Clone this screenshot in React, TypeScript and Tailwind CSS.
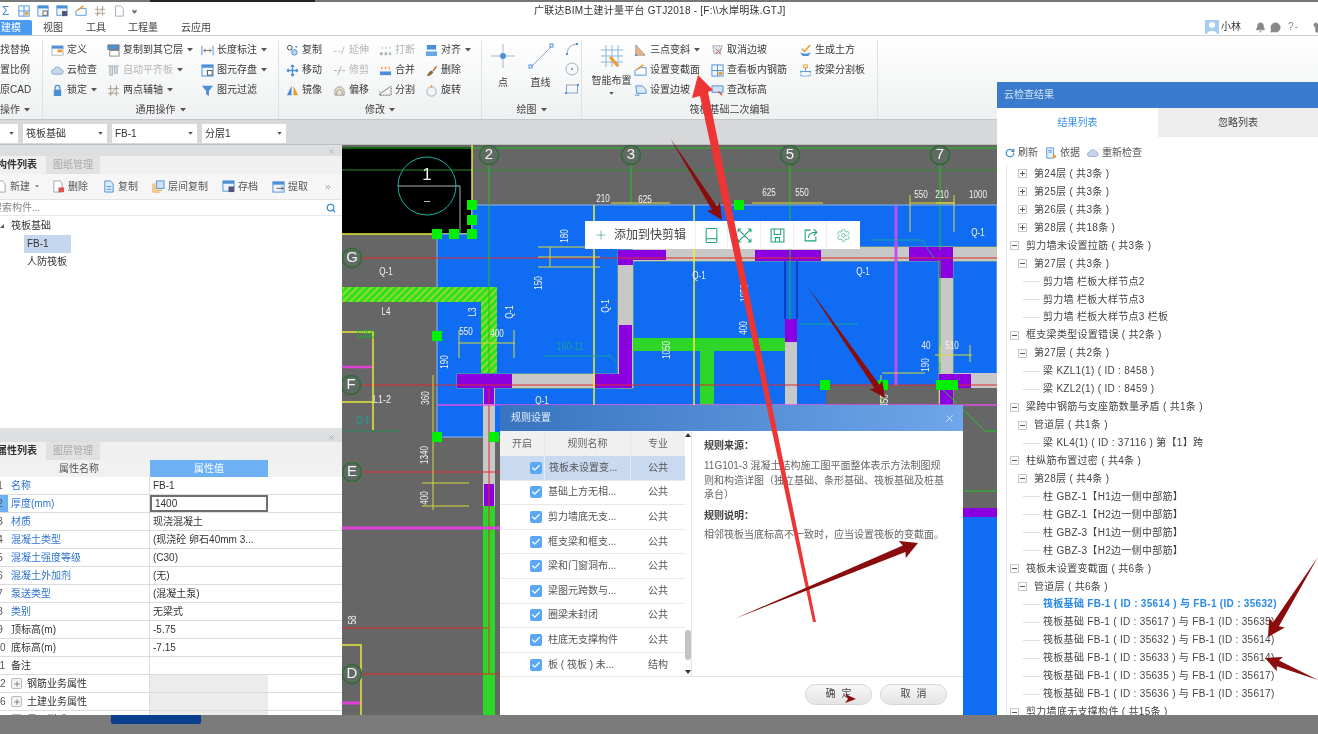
import type { ReactNode } from "react";
import { Check, Search, X, Plus, Bell, MessageCircle, Shirt, RotateCw, ChevronsRight, Settings } from "lucide-react";

const Ic = ({ children, size = 13 }: { children: ReactNode; size?: number }) => (
  <svg width={size} height={size} viewBox="0 0 14 14" fill="none" className="shrink-0">
    {children}
  </svg>
);

const B = "#4a8fd8";
const O = "#ee9a2e";
const G = "#a9b3bd";

const icons: { [key: string]: ReactNode } = {
  define: <><rect x="1" y="2" width="12" height="10" fill="#fff" stroke={G} /><rect x="1" y="2" width="12" height="3" fill={B} /><rect x="7" y="6" width="5" height="3" fill={O} /></>,
  cloud: <path d="M3 11a2.5 2.5 0 0 1 0-5 4 4 0 0 1 7.5-.5A2.8 2.8 0 0 1 11 11Z" fill="#c5d6ea" stroke="#8fabc9" />,
  lock: <><path d="M4.5 6V4a2.5 2.5 0 0 1 5 0v2" stroke={B} strokeWidth="1.4" /><rect x="3" y="6" width="8" height="7" rx="1" fill={B} /></>,
  copyFloor: <><rect x="1" y="1" width="12" height="5" fill={B} stroke="#777" /><rect x="3" y="7" width="10" height="6" fill="#fff" stroke="#888" /></>,
  align: <><path d="M1 2h12" stroke={G} /><rect x="3" y="3" width="3" height="9" fill="#ddd" stroke={G} /><rect x="8" y="3" width="3" height="7" fill="#ddd" stroke={G} /></>,
  axis: <path d="M4 1v12M10 1v12M1 5h12M1 10h12M3 12l8-9" stroke="#9a8f75" strokeWidth="0.8" />,
  dim: <><path d="M1 2v10M13 2v10" stroke={B} /><path d="M3 7h8M3 7l2-2M3 7l2 2M11 7 9 5M11 7 9 9" stroke="#555" strokeWidth="0.8" /></>,
  store: <><rect x="1" y="1" width="12" height="12" fill="#eef4fb" stroke={B} /><rect x="1" y="1" width="12" height="3" fill={B} /><rect x="7" y="7" width="5" height="5" fill="#fff" stroke="#555" /></>,
  filter: <path d="M1 2h12L8.5 7.5V13L5.5 11V7.5Z" fill={B} />,
  copy: <><circle cx="4" cy="4" r="2.5" stroke="#444" /><circle cx="9" cy="9" r="3" fill="#b7d3f0" stroke={B} /><circle cx="11" cy="3" r="1" fill={B} /></>,
  move: <path d="M7 1v12M1 7h12M7 1 5.5 3M7 1l1.5 2M7 13l-1.5-2M7 13l1.5-2M1 7l2-1.5M1 7l2 1.5M13 7l-2-1.5M13 7l-2 1.5" stroke={B} strokeWidth="1.4" />,
  mirror: <><path d="M1 12 6 2v10Z" fill={B} /><path d="M13 12 8 2v10Z" fill={O} /></>,
  extend: <path d="M1 8h3M6 8h2M12 3 9 11" stroke="#bbb" />,
  trim: <path d="M1 7h3M6 7h2M10 7h3M9 2 5 12" stroke="#aaa" />,
  offset: <><path d="M2 12V8a5 5 0 0 1 10 0v4Z" fill="#ece5c8" stroke="#999" /><path d="M4 12V9a3 3 0 0 1 6 0v3" stroke="#999" /></>,
  breakIt: <><rect x="1" y="9" width="3" height="3" fill={G} /><rect x="6" y="9" width="3" height="3" fill={G} /><rect x="11" y="9" width="2" height="3" fill={G} /><path d="M3 4h1M7 4h1M11 4h1" stroke={G} strokeWidth="2" /></>,
  merge: <><rect x="1" y="8" width="12" height="4" fill={B} /><path d="M3 3v3M7 3v3M11 3v3" stroke={O} strokeWidth="1.4" /></>,
  split: <><path d="M1 12h12M1 12V8M13 12V2" stroke="#555" strokeDasharray="2 1" /><path d="M2 10 12 3" stroke="#777" /></>,
  alignR: <><rect x="2" y="1" width="10" height="5" fill={B} /><rect x="1" y="8" width="12" height="5" fill="#6aa6e6" /></>,
  del: <><path d="M2 13c1-3 3-5 5-6l2 2c-1 2-3 4-7 4Z" fill="#8c6b3a" /><path d="M8 7l4-5 1 1-4 5Z" fill="#b36a2c" /></>,
  rotate: <><circle cx="7" cy="8" r="5" stroke="#b8c4cf" strokeWidth="1.4" /><path d="M7 1v3" stroke={O} strokeWidth="1.4" /></>,
  slope: <><path d="M2 1v11h10Z" fill="#f0b27a" stroke="#999" /><rect x="1" y="11" width="2" height="2" fill={B} /></>,
  section: <><path d="M1 12V7l6-3h6v8Z" fill="#fff" stroke={B} /><path d="M3 6l7-5" stroke={O} strokeWidth="1.6" /></>,
  slopeSet: <><path d="M2 2h7l4 4v4H3Z" fill="#dbe8f5" stroke={B} /><path d="M1 12h5" stroke={B} /></>,
  cancel: <><path d="M2 2h10l-2 8H3Z" fill="#dbe8f5" stroke="#888" strokeDasharray="2 1" /><path d="M5 5l6 6M11 5l-6 6" stroke="#d65b4a" /></>,
  rebar: <><rect x="1" y="1" width="12" height="12" fill="#f2f7fc" stroke={B} /><path d="M1 7h12M7 1v12" stroke={B} /><circle cx="10" cy="10" r="2" fill={O} /></>,
  level: <><path d="M1 2h12v7H6L1 9Z" fill="#cfe0f2" stroke={B} /><path d="M8 8l4 4" stroke="#d65b4a" strokeWidth="1.6" /></>,
  earth: <><path d="M3 5l3 3 6-7" stroke={O} strokeWidth="1.6" /><path d="M1 9c3 2 9 2 12 0l-3 4H4Z" fill={B} /></>,
  cut: <><rect x="5" y="1" width="4" height="3" stroke={O} /><path d="M7 4v3M1 8h12" stroke={B} /><path d="M2 8v5h10V8" stroke={B} strokeDasharray="2 1" /></>,
  doc: <><path d="M3 1h6l3 3v9H3Z" fill="#fff" stroke="#9aa5b1" /></>,
  docDel: <><path d="M2 1h7l2 3v9H2Z" fill="#fff" stroke="#9aa5b1" /><rect x="7" y="8" width="6" height="5" fill="#d9534f" /></>,
  docCopy: <><path d="M3 1h6l3 3v9H3Z" fill="#dcebfa" stroke={B} /><path d="M5 7h5M5 10h5" stroke={B} /></>,
  layerCopy: <><rect x="5" y="1" width="8" height="8" fill="#cfe3f8" stroke={B} /><path d="M1 4v9h8M3 3v8h8" stroke={O} /></>,
  archive: <><rect x="1" y="1" width="12" height="11" fill="#eef4fb" stroke={B} /><rect x="1" y="1" width="12" height="3" fill={B} /><rect x="7" y="7" width="6" height="6" fill="#557" /></>,
  extract: <><rect x="1" y="2" width="12" height="11" fill="#eef4fb" stroke={B} /><rect x="1" y="2" width="12" height="3" fill={B} /><path d="M5 9h7M10 7l2 2-2 2" stroke="#555" /></>,
  ref: <><path d="M2 1h8v12H2Z" fill="#e3eefa" stroke={B} /><path d="M4 4h4M4 6h4" stroke={B} /><circle cx="11" cy="11" r="2" fill={O} /></>,
};

const Caret = () => (
  <svg width="6" height="4" viewBox="0 0 6 4" className="ml-[4px] shrink-0">
    <path d="M0 0h6L3 3.5Z" fill="#555" />
  </svg>
);

type Item = { icon: string; label: string; caret?: boolean; off?: boolean };

const RibbonCol = ({ items, className }: { items: Item[]; className: string }) => (
  <div className={`flex flex-col ${className}`}>
    {items.map((it) => (
      <div key={it.label} className={`flex h-[20px] items-center ${it.off ? "text-[#b5b5b5]" : "text-[#3a3a3a]"}`}>
        <span className="w-[16px]">
          <Ic>{icons[it.icon]}</Ic>
        </span>
        <span className="whitespace-nowrap">{it.label}</span>
        {it.caret && <Caret />}
      </div>
    ))}
  </div>
);

const GroupLabel = ({ text, caret = true }: { text: string; caret?: boolean }) => (
  <div className="flex h-[20px] items-center justify-center text-[#444]">
    {text}
    {caret && <Caret />}
  </div>
);

const Ribbon = () => (
  <div className="flex h-[84px] border-b border-[#c4c6c8] bg-gradient-to-b from-white to-[#eef0f1] pt-[4px]">
    <div className="w-[43px] border-r border-[#dfe1e3]">
      <div className="flex h-[60px] flex-col text-[#3a3a3a]">
        <div className="flex h-[20px] items-center">找替换</div>
        <div className="flex h-[20px] items-center">置比例</div>
        <div className="flex h-[20px] items-center">原CAD</div>
      </div>
      <div className="flex h-[19px] items-center text-[#444]">
        操作
        <Caret />
      </div>
    </div>

    <div className="w-[236px] border-r border-[#dfe1e3]">
      <div className="flex h-[60px] pl-[8px]">
        <RibbonCol className="w-[56px]" items={[{ icon: "define", label: "定义" }, { icon: "cloud", label: "云检查" }, { icon: "lock", label: "锁定", caret: true }]} />
        <RibbonCol className="w-[94px]" items={[{ icon: "copyFloor", label: "复制到其它层", caret: true }, { icon: "align", label: "自动平齐板", caret: true, off: true }, { icon: "axis", label: "两点辅轴", caret: true }]} />
        <RibbonCol className="w-[77px]" items={[{ icon: "dim", label: "长度标注", caret: true }, { icon: "store", label: "图元存盘", caret: true }, { icon: "filter", label: "图元过滤" }]} />
      </div>
      <GroupLabel text="通用操作" />
    </div>

    <div className="w-[203px] border-r border-[#dfe1e3]">
      <div className="flex h-[60px] pl-[7px]">
        <RibbonCol className="w-[47px]" items={[{ icon: "copy", label: "复制" }, { icon: "move", label: "移动" }, { icon: "mirror", label: "镜像" }]} />
        <RibbonCol className="w-[46px]" items={[{ icon: "extend", label: "延伸", off: true }, { icon: "trim", label: "修剪", off: true }, { icon: "offset", label: "偏移" }]} />
        <RibbonCol className="w-[46px]" items={[{ icon: "breakIt", label: "打断", off: true }, { icon: "merge", label: "合并" }, { icon: "split", label: "分割" }]} />
        <RibbonCol className="w-[50px]" items={[{ icon: "alignR", label: "对齐", caret: true }, { icon: "del", label: "删除" }, { icon: "rotate", label: "旋转" }]} />
      </div>
      <GroupLabel text="修改" />
    </div>

    <div className="w-[100px] border-r border-[#dfe1e3]">
      <div className="flex h-[60px] text-[#3a3a3a]">
        <div className="flex w-[42px] flex-col items-center pt-[3px]">
          <svg width="26" height="26" viewBox="0 0 26 26">
            <path d="M13 1v24M1 13h24" stroke="#9fb9d6" />
            <circle cx="13" cy="13" r="3" fill={B} />
          </svg>
          <span className="mt-[9px]">点</span>
        </div>
        <div className="flex w-[33px] flex-col items-center pt-[3px]">
          <svg width="26" height="26" viewBox="0 0 26 26">
            <path d="M3 24 24 3" stroke="#8aa6c4" />
            <rect x="1" y="22" width="3" height="3" fill="#fff" stroke={B} />
            <rect x="22" y="1" width="3" height="3" fill="#fff" stroke={B} />
          </svg>
          <span className="mt-[9px]">直线</span>
        </div>
        <div className="flex flex-col items-center gap-[6px] pl-[8px] pt-[2px]">
          <svg width="14" height="14" viewBox="0 0 14 14" fill="none"><path d="M2 13C2 6 6 2 13 2" stroke="#8aa6c4" /><rect x="1" y="11" width="2" height="2" fill={B} /><rect x="11" y="1" width="2" height="2" fill={B} /></svg>
          <svg width="14" height="14" viewBox="0 0 14 14" fill="none"><circle cx="7" cy="7" r="6" stroke="#9fb2c6" /><circle cx="7" cy="7" r="1" fill={B} /></svg>
          <svg width="14" height="14" viewBox="0 0 14 14" fill="none"><rect x="1.5" y="3" width="11" height="8" stroke="#8aa6c4" /><rect x="0" y="10" width="2" height="2" fill={B} /><rect x="12" y="2" width="2" height="2" fill={B} /></svg>
        </div>
      </div>
      <GroupLabel text="绘图" />
    </div>

    <div className="w-[296px] border-r border-[#dfe1e3]">
      <div className="flex h-[60px] pl-[7px]">
        <div className="flex w-[45px] flex-col items-center pt-[4px] text-[#3a3a3a]">
          <svg width="28" height="26" viewBox="0 0 28 26">
            <path d="M3 6h22M3 12h22M3 18h22M8 1v22M14 1v22M20 1v22" stroke="#8ab4e2" />
            <path d="M12 13l8 9" stroke={O} strokeWidth="3" />
          </svg>
          <span className="mt-[6px] whitespace-nowrap">智能布置</span>
          <svg width="5" height="3" viewBox="0 0 6 4" className="mt-[6px]"><path d="M0 0h6L3 3.5Z" fill="#555" /></svg>
        </div>
        <RibbonCol className="w-[77px]" items={[{ icon: "slope", label: "三点变斜", caret: true }, { icon: "section", label: "设置变截面" }, { icon: "slopeSet", label: "设置边坡" }]} />
        <RibbonCol className="w-[88px]" items={[{ icon: "cancel", label: "取消边坡" }, { icon: "rebar", label: "查看板内钢筋" }, { icon: "level", label: "查改标高" }]} />
        <RibbonCol className="w-[72px]" items={[{ icon: "earth", label: "生成土方" }, { icon: "cut", label: "按梁分割板" }]} />
      </div>
      <GroupLabel text="筏板基础二次编辑" caret={false} />
    </div>
  </div>
);

const Selector = ({ text, className }: { text: string; className: string }) => (
  <div className={`flex h-[19px] items-center justify-between bg-white pl-[3px] pr-[4px] text-[#333] ${className}`}>
    <span>{text}</span>
    <svg width="5" height="3" viewBox="0 0 6 4"><path d="M0 0h6L3 3.5Z" fill="#555" /></svg>
  </div>
);

const PanelTop = () => (
  <div className="flex h-[10px] shrink-0 items-center justify-end bg-[#dcdee0] pr-[7px]">
    <X size={7} strokeWidth={2} className="text-[#8f959b]" />
  </div>
);

const PanelTabs = ({ active, other }: { active: string; other: string }) => (
  <div className="flex h-[18px] shrink-0 bg-[#f0f0f0]">
    <div className="-ml-[3px] flex w-[49px] items-center font-bold text-[#333]">{active}</div>
    <div className="flex w-[54px] items-center justify-center bg-[#e1e1e1] text-[#aaa]">{other}</div>
  </div>
);

const tools: [string, string, string][] = [
  ["docCopy", "复制", "w-[50px]"],
  ["layerCopy", "层间复制", "w-[70px]"],
  ["archive", "存档", "w-[50px]"],
  ["extract", "提取", "w-[52px]"],
];

const ComponentPanel = () => (
  <div className="flex h-[282px] shrink-0 flex-col bg-white">
    <PanelTop />
    <PanelTabs active="构件列表" other="图纸管理" />
    <div className="flex h-[26px] shrink-0 items-center border-b border-[#e4e4e4] bg-[#f6f6f6] text-[#555]">
      <div className="-ml-[6px] flex w-[58px] items-center gap-[3px]">
        <Ic size={13}>{icons.doc}</Ic>
        <span>新建</span>
        <svg width="4" height="3" viewBox="0 0 6 4" className="ml-[2px]"><path d="M0 0h6L3 3.5Z" fill="#777" /></svg>
      </div>
      <div className="flex w-[50px] items-center gap-[3px]">
        <Ic size={13}>{icons.docDel}</Ic>
        <span>删除</span>
      </div>
      {tools.map(([icon, label, w]) => (
        <div key={label} className={`flex items-center gap-[3px] ${w}`}>
          <Ic size={13}>{icons[icon]}</Ic>
          <span>{label}</span>
        </div>
      ))}
      <ChevronsRight size={8} className="text-[#777]" />
    </div>
    <div className="flex h-[16px] shrink-0 items-center justify-between border-b border-[#e8e8e8] pr-[6px] text-[#888]">
      <span className="-ml-[8px]">搜索构件...</span>
      <Search size={10} strokeWidth={3} className="text-[#3f8fd0]" />
    </div>
    <div className="flex flex-col pt-[1px] text-[#333]">
      <div className="flex h-[18px] items-center">
        <svg width="4" height="4" viewBox="0 0 4 4" className="ml-[0px] mr-[7px]"><path d="M4 0v4H0Z" fill="#555" /></svg>
        筏板基础
      </div>
      <div className="ml-[24px] flex h-[18px] w-[47px] items-center bg-[#c5d7ee] pl-[3px]">FB-1</div>
      <div className="ml-[27px] flex h-[18px] items-center">人防筏板</div>
    </div>
  </div>
);

const attrs: [string, string, string, boolean][] = [
  ["1", "名称", "FB-1", true],
  ["2", "厚度(mm)", "1400", true],
  ["3", "材质", "现浇混凝土", true],
  ["4", "混凝土类型", "(现浇砼 卵石40mm 3...", true],
  ["5", "混凝土强度等级", "(C30)", true],
  ["6", "混凝土外加剂", "(无)", true],
  ["7", "泵送类型", "(混凝土泵)", true],
  ["8", "类别", "无梁式", true],
  ["9", "顶标高(m)", "-5.75", false],
  ["10", "底标高(m)", "-7.15", false],
  ["11", "备注", "", false],
];

const AttrRow = ({ no, children, value, boxed, shaded }: { no: string; children: ReactNode; value: string; boxed?: boolean; shaded?: boolean }) => (
  <div className="flex h-[18px] shrink-0 border-b border-[#dcdcdc]">
    <div className={`flex w-[8px] items-center overflow-hidden text-[#555] ${boxed ? "bg-[#6db1f5]" : ""}`}>
      <span className="-ml-[8px] w-[16px] shrink-0 text-center">{no}</span>
    </div>
    <div className="flex w-[142px] items-center border-r border-[#dcdcdc] pl-[3px]">{children}</div>
    <div className={`flex w-[118px] items-center pl-[3px] text-[#333] ${boxed ? "border-2 border-[#6e6e6e] pl-[1px]" : ""} ${shaded ? "bg-[#ececec]" : ""}`}>{value}</div>
  </div>
);

const PlusBox = () => (
  <span className="mr-[5px] flex h-[11px] w-[11px] items-center justify-center rounded-[2px] border border-[#bbb] bg-[#f3f3f3]">
    <Plus size={8} strokeWidth={2} className="text-[#555]" />
  </span>
);

const AttrPanel = () => (
  <div className="flex h-[283px] shrink-0 flex-col overflow-hidden bg-white">
    <PanelTop />
    <PanelTabs active="属性列表" other="图层管理" />
    <div className="flex h-[17px] shrink-0 bg-[#f1f1f1]">
      <div className="flex w-[150px] items-center justify-center pl-[8px] text-[#555]">属性名称</div>
      <div className="flex w-[118px] items-center justify-center bg-[#6db1f5] text-white">属性值</div>
    </div>
    {attrs.map(([no, name, value, link]) => (
      <AttrRow key={no} no={no} value={value} boxed={no === "2"}>
        <span className={link ? "text-[#2f74d0]" : "text-[#333]"}>{name}</span>
      </AttrRow>
    ))}
    <AttrRow no="12" value="" shaded>
      <PlusBox />
      <span className="text-[#333]">钢筋业务属性</span>
    </AttrRow>
    <AttrRow no="26" value="" shaded>
      <PlusBox />
      <span className="text-[#333]">土建业务属性</span>
    </AttrRow>
    <AttrRow no="36" value="" shaded>
      <PlusBox />
      <span className="text-[#333]">显示样式</span>
    </AttrRow>
  </div>
);

// CAD labels are condensed, so squeeze them with textLength
const Num = ({ x, y, t, r, fill = "#f2f2f2" }: { x: number; y: number; t: string; r?: boolean; fill?: string }) => (
  <text
    x={x}
    y={y}
    fontSize={11}
    fill={fill}
    textAnchor="middle"
    dominantBaseline="middle"
    textLength={t.length * 4.5}
    lengthAdjust="spacingAndGlyphs"
    transform={r ? `rotate(-90 ${x} ${y})` : undefined}
  >
    {t}
  </text>
);

const AxisMark = ({ x, y, t }: { x: number; y: number; t: string }) => (
  <g>
    <circle cx={x} cy={y} r={9.5} fill="#5f6b62" stroke="#2f6a35" strokeWidth="1.5" />
    <text x={x} y={y + 0.5} fontSize={15} fill="#f4f4f4" textAnchor="middle" dominantBaseline="middle">{t}</text>
  </g>
);

const squares: [number, number][] = [[472, 205], [472, 220], [472, 234], [454, 234], [437, 234], [739, 205], [437, 336], [825, 385], [883, 385], [437, 437], [494, 437]];

const labels: [number, number, string, boolean?][] = [
  [603, 199, "210"], [645, 200, "625"], [769, 193, "625"], [802, 193, "550"], [921, 195, "550"], [942, 195, "210"], [978, 195, "1000"],
  [386, 272, "Q-1"], [386, 312, "L4"], [382, 400, "L1-2"],
  [473, 312, "L3", true], [510, 312, "Q-1", true], [606, 306, "Q-1", true],
  [542, 401, "Q-1"], [699, 276, "Q-1"], [863, 272, "Q-1"], [978, 233, "Q-1"],
  [565, 236, "180", true], [539, 283, "150", true], [466, 332, "550"], [497, 334, "400"],
  [445, 362, "190", true], [426, 398, "360", true], [425, 455, "1340", true], [425, 498, "400", true], [353, 620, "58", true],
  [667, 350, "1050", true], [745, 293, "1050", true], [744, 328, "400", true], [926, 365, "190", true], [885, 401, "350", true], [926, 346, "40"], [952, 346, "510"],
];

const Canvas = () => (
  <div className="h-[570px] w-[655px] shrink-0 bg-[#666666]">
    <svg width="655" height="570" viewBox="342 145 655 570" fill="none" className="block">
      <defs>
        <pattern id="hatch" width="5" height="5" patternUnits="userSpaceOnUse" patternTransform="rotate(45)">
          <rect width="5" height="5" fill="#2fe01c" />
          <rect width="1.6" height="5" fill="#a8d83a" />
        </pattern>
      </defs>
      <rect x="342" y="147" width="130" height="87" fill="#000" />
      <path d="M342 148H997" stroke="#22c322" />
      <path d="M342 170H997" stroke="#2c8a2c" />
      <path d="M342 234H472V145" stroke="#e8e83a" strokeWidth="1.5" />
      <circle cx="427" cy="186" r="29" stroke="#17b3a3" />
      <path d="M398 186H460V281" stroke="#aab6b6" />
      <text x="427" y="176" fontSize="17" fill="#f2f2f2" textAnchor="middle" dominantBaseline="middle">1</text>
      <text x="427" y="201" fontSize="11" fill="#f2f2f2" textAnchor="middle" dominantBaseline="middle">–</text>

      {/* slab */}
      <path d="M472 205H997V388H953V405H595V437H437V234H472Z" fill="#0f6cf3" stroke="#8cb8f0" />
      <rect x="826" y="385" width="113" height="20" fill="#666" />
      <rect x="953" y="388" width="44" height="17" fill="#666" />
      <rect x="500" y="405" width="497" height="310" fill="#0f6cf3" />
      <rect x="940" y="405" width="57" height="105" fill="#666" />

      {/* hatched beam */}
      <path d="M342 287H497V373H481V302H342Z" fill="url(#hatch)" />

      {/* beams */}
      <rect x="633" y="247" width="364" height="14" fill="#c8c8c8" stroke="#d8d84a" strokeWidth="0.6" />
      <rect x="618" y="250" width="15" height="138" fill="#c8c8c8" stroke="#d8d84a" strokeWidth="0.6" />
      <rect x="457" y="374" width="175" height="14" fill="#c8c8c8" stroke="#d8d84a" strokeWidth="0.6" />
      <rect x="483" y="388" width="12" height="118" fill="#c8c8c8" />
      <rect x="939" y="247" width="14" height="168" fill="#c8c8c8" stroke="#d8d84a" strokeWidth="0.6" />
      <rect x="953" y="373" width="44" height="15" fill="#c8c8c8" />
      <rect x="785" y="342" width="12" height="63" fill="#c8c8c8" />
      <path d="M785 261V319M797 261V319" stroke="#0a2fb0" strokeWidth="1.5" />
      <rect x="633" y="338" width="152" height="13" fill="#2fd62a" />
      <rect x="700" y="351" width="14" height="54" fill="#2fd62a" />
      <rect x="483" y="506" width="12" height="209" fill="#2fd62a" />

      <g fill="#8a00e0">
        <rect x="457" y="374" width="55" height="14" />
        <rect x="484" y="388" width="10" height="16" />
        <rect x="595" y="374" width="37" height="14" />
        <rect x="619" y="325" width="13" height="63" />
        <rect x="618" y="250" width="15" height="15" />
        <rect x="633" y="250" width="33" height="10" />
        <rect x="755" y="250" width="66" height="11" />
        <rect x="909" y="247" width="44" height="14" />
        <rect x="939" y="247" width="14" height="31" />
        <rect x="785" y="319" width="12" height="23" />
        <rect x="939" y="374" width="32" height="14" />
        <rect x="940" y="388" width="13" height="17" />
        <rect x="484" y="484" width="10" height="22" />
        <rect x="963" y="508" width="34" height="9" />
      </g>

      {/* lines */}
      <path d="M342 258H997" stroke="#e02a2a" />
      <path d="M342 385H997" stroke="#e02a2a" />
      <path d="M342 472H500" stroke="#e02a2a" />
      <path d="M342 628H489M342 674H500M489 388V674" stroke="#e02a2a" />
      <path d="M437 405H997" stroke="#e050e0" strokeWidth="1.5" />
      <path d="M342 528H500" stroke="#e040d8" strokeWidth="3" />
      <path d="M342 703H361" stroke="#e040d8" strokeWidth="3" />
      <path d="M342 367H373" stroke="#e040d8" strokeWidth="2.5" />
      <path d="M896 206V385" stroke="#c050f0" strokeWidth="3" />
      <path d="M342 332H373V430M342 402H373" stroke="#e8e83a" strokeWidth="1.5" />
      <path d="M342 645H361V715" stroke="#e8e83a" strokeWidth="1.5" />
      <path d="M594 205V405M694 205V405" stroke="#eeee33" strokeWidth="1.5" />
      <path d="M489 155V374M631 155V205M790 155V320M940 155V250M940 260V373" stroke="#22c322" />
      <path d="M433 375V510M422 483H469M422 506H469" stroke="#d8d83a" />
      <path d="M611 203H670M752 203H823M910 203H955M936 203H954M910 195V232M954 195V232" stroke="#d8d83a" />
      <path d="M459 343H515M459 330V358M514 330V358M538 247H600M538 257H600M538 267H600M550 247V267" stroke="#d8d83a" />
      <path d="M935 355H972M970 345V362M940 345V362M882 373H925M881 375V405" stroke="#d8d83a" />
      <path d="M544 356H610L617 362M870 240H922L934 258M800 324H858" stroke="#15a59a" />
      <path d="M342 431H400" stroke="#2a8a5a" />
      <path d="M941 388 985 431H997" stroke="#22c322" />
      <path d="M963 491H997" stroke="#22c322" />

      {squares.map(([x, y]) => (
        <rect key={`${x}-${y}`} x={x - 5} y={y - 5} width="10" height="10" fill="#00f000" />
      ))}
      <rect x="936" y="380" width="22" height="10" fill="#00f000" />

      <AxisMark x={489} y={155} t="2" />
      <AxisMark x={631} y={155} t="3" />
      <AxisMark x={790} y={155} t="5" />
      <AxisMark x={940} y={155} t="7" />
      <AxisMark x={352} y={258} t="G" />
      <AxisMark x={351} y={385} t="F" />
      <AxisMark x={352} y={472} t="E" />
      <AxisMark x={352} y={674} t="D" />

      {labels.map(([x, y, t, r]) => (
        <Num key={`${x}-${y}`} x={x} y={y} t={t} r={r} />
      ))}
      <Num x={366} y={335} t="C350" fill="#12c020" />
      <Num x={363} y={421} t="Q-1" fill="#15a59a" />
      <Num x={570} y={347} t="160-11" fill="#15a59a" />
    </svg>
  </div>
);

const clipIcons: ReactNode[] = [
  <><rect x="2" y="0.5" width="10" height="13" rx="1" /><path d="M2 10h10" /></>,
  <path d="M1 1l12 12M13 1 1 13M1 1h3M1 1v3M13 1h-3M13 1v3M1 13h3M1 13v-3M13 13h-3M13 13v-3" />,
  <><path d="M1 1h12v12H1Z" /><path d="M4 1v5h6V1M5 13V9h4v4" /></>,
  <><path d="M7 2H2v10h10V8" /><path d="M5 9c0-3 3-5 8-5M10 1l3 3-3 3" /></>,
];

const ClipBar = () => (
  <div className="absolute left-[585px] top-[221px] flex h-[28px] w-[275px] items-center bg-white text-[12px] text-[#444]">
    <div className="flex h-full w-[111px] items-center border-r border-[#eee] pl-[9px]">
      <Plus size={14} strokeWidth={1} className="mr-[6px] text-[#1d9a6c]" />
      添加到快剪辑
    </div>
    {clipIcons.map((icon, i) => (
      <div key={i} className="flex h-full w-[33px] items-center justify-center border-r border-[#eee]">
        <svg width="15" height="15" viewBox="0 0 14 14" fill="none" stroke="#21a179" strokeWidth="1">
          {icon}
        </svg>
      </div>
    ))}
    <div className="flex h-full w-[33px] items-center justify-center">
      <Settings size={15} strokeWidth={1} className="text-[#21a179]" />
    </div>
  </div>
);

const rules: [string, string][] = [
  ["筏板未设置变...", "公共"],
  ["基础上方无相...", "公共"],
  ["剪力墙底无支...", "公共"],
  ["框支梁和框支...", "公共"],
  ["梁和门窗洞布...", "公共"],
  ["梁图元跨数与...", "公共"],
  ["圈梁未封闭", "公共"],
  ["柱底无支撑构件", "公共"],
  ["板 ( 筏板 ) 未...", "结构"],
];

const RuleDialog = () => (
  <div className="absolute left-[500px] top-[405px] flex h-[310px] w-[463px] flex-col bg-white text-[#555]">
    <div className="flex h-[26px] shrink-0 items-center justify-between bg-gradient-to-r from-[#3874c0] to-[#70a6ea] pl-[11px] pr-[8px] text-[#e8f0fa]">
      规则设置
      <X size={11} strokeWidth={2} className="text-[#dde8f5]" />
    </div>
    <div className="flex h-[246px] shrink-0 border-b border-[#e5e5e5]">
      <div className="flex w-[192px] border-r border-[#e5e5e5]">
        <div className="w-[185px]">
          <div className="flex h-[25px] bg-[#f0f0f0] text-[#666]">
            <div className="flex w-[44px] items-center justify-center">开启</div>
            <div className="flex w-[87px] items-center justify-center border-x border-[#e6e6e6]">规则名称</div>
            <div className="flex w-[54px] items-center justify-center">专业</div>
          </div>
          {rules.map(([name, major], i) => (
            <div key={name} className={`flex h-[24.6px] border-b border-[#e8e8e8] ${i === 0 ? "bg-[#c9daf0]" : ""}`}>
              <div className="flex w-[44px] items-center justify-end pr-[2px]">
                <span className="flex h-[12px] w-[12px] items-center justify-center rounded-[2px] bg-[#5aa7f5]">
                  <Check size={10} strokeWidth={3} className="text-white" />
                </span>
              </div>
              <div className={`flex w-[87px] items-center pl-[4px] ${i === 0 ? "border-x border-[#e3ebf5]" : ""}`}>{name}</div>
              <div className="flex w-[54px] items-center justify-center">{major}</div>
            </div>
          ))}
        </div>
        <div className="flex w-[7px] flex-col items-center justify-between py-[2px]">
          <svg width="6" height="4" viewBox="0 0 6 4"><path d="M0 4h6L3 0Z" fill="#333" /></svg>
          <div className="mb-[10px] mt-auto h-[30px] w-[6px] rounded-[3px] bg-[#c4c4c4]" />
          <svg width="6" height="4" viewBox="0 0 6 4"><path d="M0 0h6L3 4Z" fill="#333" /></svg>
        </div>
      </div>
      <div className="w-[262px] pl-[12px] pt-[10px]">
        <div className="font-bold text-[#444]">规则来源：</div>
        <div className="mt-[8px] w-[246px] leading-[14.5px] text-[#666]">
          11G101-3 混凝土结构施工图平面整体表示方法制图规则和构造详图（独立基础、条形基础、筏板基础及桩基承台）
        </div>
        <div className="mt-[8px] font-bold text-[#444]">规则说明：</div>
        <div className="mt-[9px] text-[#666]">相邻筏板当底标高不一致时，应当设置筏板的变截面。</div>
      </div>
    </div>
    <div className="flex flex-1 items-center justify-end gap-[8px] pr-[16px] pb-[4px]">
      <div className="flex h-[21px] w-[67px] items-center justify-center gap-[6px] rounded-full border border-[#d5d5d5] bg-gradient-to-b from-[#f7f7f7] to-[#e4e4e4] text-[#444]">
        <span>确</span>
        <span>定</span>
      </div>
      <div className="flex h-[21px] w-[67px] items-center justify-center gap-[6px] rounded-full border border-[#d5d5d5] bg-gradient-to-b from-[#f7f7f7] to-[#e4e4e4] text-[#444]">
        <span>取</span>
        <span>消</span>
      </div>
    </div>
  </div>
);

// level 1 = category, 2 = floor, 3 = leaf
const tree: [number, string, boolean?][] = [
  [2, "第24层 ( 共3条 )", true],
  [2, "第25层 ( 共3条 )", true],
  [2, "第26层 ( 共3条 )", true],
  [2, "第28层 ( 共18条 )", true],
  [1, "剪力墙未设置拉筋 ( 共3条 )"],
  [2, "第27层 ( 共3条 )"],
  [3, "剪力墙 栏板大样节点2"],
  [3, "剪力墙 栏板大样节点3"],
  [3, "剪力墙 栏板大样节点3 栏板"],
  [1, "框支梁类型设置错误 ( 共2条 )"],
  [2, "第27层 ( 共2条 )"],
  [3, "梁 KZL1(1) ( ID : 8458 )"],
  [3, "梁 KZL2(1) ( ID : 8459 )"],
  [1, "梁跨中钢筋与支座筋数量矛盾 ( 共1条 )"],
  [2, "管道层 ( 共1条 )"],
  [3, "梁 KL4(1) ( ID : 37116 ) 第【1】跨"],
  [1, "柱纵筋布置过密 ( 共4条 )"],
  [2, "第28层 ( 共4条 )"],
  [3, "柱 GBZ-1【H1边一侧中部筋】"],
  [3, "柱 GBZ-1【H2边一侧中部筋】"],
  [3, "柱 GBZ-3【H1边一侧中部筋】"],
  [3, "柱 GBZ-3【H2边一侧中部筋】"],
  [1, "筏板未设置变截面 ( 共6条 )"],
  [2, "管道层 ( 共6条 )"],
  [3, "筏板基础 FB-1 ( ID : 35614 ) 与 FB-1 (ID : 35632)"],
  [3, "筏板基础 FB-1 ( ID : 35617 ) 与 FB-1 (ID : 35635)"],
  [3, "筏板基础 FB-1 ( ID : 35632 ) 与 FB-1 (ID : 35614)"],
  [3, "筏板基础 FB-1 ( ID : 35633 ) 与 FB-1 (ID : 35614)"],
  [3, "筏板基础 FB-1 ( ID : 35635 ) 与 FB-1 (ID : 35617)"],
  [3, "筏板基础 FB-1 ( ID : 35636 ) 与 FB-1 (ID : 35617)"],
  [1, "剪力墙底无支撑构件 ( 共15条 )"],
];

const TreeBox = ({ plus }: { plus?: boolean }) => (
  <span className="flex h-[9px] w-[9px] shrink-0 items-center justify-center border border-[#c8c8c8] bg-white text-[#555]">
    <svg width="7" height="7" viewBox="0 0 7 7">
      <path d={plus ? "M1 3.5h5M3.5 1v5" : "M1 3.5h5"} stroke="#555" />
    </svg>
  </span>
);

const ResultPanel = () => (
  <div className="absolute left-[997px] top-[82px] flex h-[633px] w-[321px] flex-col overflow-hidden bg-white text-[#444]">
    <div className="flex h-[26px] shrink-0 items-center bg-[#3a7bcd] pl-[7px] text-[#d4e4f7]">云检查结果</div>
    <div className="flex h-[29px] shrink-0">
      <div className="flex w-[161px] items-center justify-center text-[#3a90e8]">结果列表</div>
      <div className="flex flex-1 items-center justify-center bg-[#eeeeee] text-[#444]">忽略列表</div>
    </div>
    <div className="flex h-[28px] shrink-0 items-center gap-[7px] pl-[8px] pt-[4px] text-[#555]">
      <span className="flex items-center gap-[3px]">
        <RotateCw size={10} strokeWidth={3} className="text-[#3f8fd0]" />
        刷新
      </span>
      <span className="flex items-center gap-[3px]">
        <Ic size={12}>{icons.ref}</Ic>
        依据
      </span>
      <span className="flex items-center gap-[3px]">
        <Ic size={12}>{icons.cloud}</Ic>
        重新检查
      </span>
    </div>
    <div className="relative shrink-0 tracking-[0.3px]">
      <div className="absolute left-[9px] top-0 h-full border-l border-[#e6e6e6]" />
      {tree.map(([level, text, plus], i) => (
        <div key={`${text}-${i}`} className="relative flex h-[17.95px] items-center whitespace-nowrap">
          {level === 1 && (
            <div className="ml-[13px] flex items-center gap-[7px]">
              <TreeBox />
              {text}
            </div>
          )}
          {level === 2 && (
            <div className="ml-[21px] flex items-center gap-[7px]">
              <TreeBox plus={plus} />
              {text}
            </div>
          )}
          {level === 3 && (
            <div className="ml-[26px] flex items-center gap-[3px]">
              <span className="w-[17px] border-t border-[#e0e0e0]" />
              <span className={i === 24 ? "font-bold text-[#2a8ae8]" : ""}>{text}</span>
            </div>
          )}
        </div>
      ))}
    </div>
  </div>
);

const taper = (x1: number, y1: number, x2: number, y2: number, w: number, head: number) => {
  const len = Math.hypot(x2 - x1, y2 - y1);
  const ux = (x2 - x1) / len;
  const uy = (y2 - y1) / len;
  const nx = -uy;
  const ny = ux;
  const bx = x2 - ux * head;
  const by = y2 - uy * head;
  const pts = [
    [x1, y1],
    [bx + (nx * w) / 2, by + (ny * w) / 2],
    [bx + nx * w * 1.3 - ux * 2, by + ny * w * 1.3 - uy * 2],
    [x2, y2],
    [bx - nx * w * 1.3 - ux * 2, by - ny * w * 1.3 - uy * 2],
    [bx - (nx * w) / 2, by - (ny * w) / 2],
  ];
  return pts.map((p) => p.join(",")).join(" ");
};

const Annotations = () => (
  <svg width="1318" height="734" viewBox="0 0 1318 734" className="pointer-events-none absolute left-0 top-0">
    <polygon points="698,75 713,90 708,92 816,622 813,622 700,96 692,98" fill="#ee3535" />
    <g fill="#8b0c0c">
      <polygon points={taper(670, 138, 722, 220, 6, 14)} />
      <polygon points={taper(808, 287, 885, 398, 6, 14)} />
      <polygon points={taper(734, 619, 918, 543, 7, 15)} />
      <polygon points={taper(1318, 557, 1268, 637, 7, 15)} />
      <polygon points={taper(1318, 680, 1265, 658, 6, 14)} />
      <polygon points="845,694 856,699 845,703 848,699" />
    </g>
  </svg>
);

const App = () => (
  <div className="relative h-[734px] w-[1318px] overflow-hidden bg-white font-['Liberation_Sans','Noto_Sans_CJK_SC',sans-serif] text-[10px] leading-none blur-[0.35px]">
    <div className="h-[2px] bg-[#777]">
      <div className="ml-[150px] h-full w-[165px] bg-[#222]" />
    </div>

    <div className="flex h-[18px] items-center bg-white">
      <div className="flex w-[534px] items-center gap-[7px] pl-[2px] text-[#4a8fd8]">
        <span className="w-[9px] text-[12px]">Σ</span>
        <Ic size={12}>{icons.rebar}</Ic>
        <Ic size={12}>{icons.store}</Ic>
        <Ic size={12}>{icons.archive}</Ic>
        <Ic size={12}>{icons.section}</Ic>
        <Ic size={12}>{icons.axis}</Ic>
        <Ic size={12}>{icons.doc}</Ic>
        <svg width="5" height="5" viewBox="0 0 6 6"><path d="M0 0h6M0 2h6L3 5.5Z" fill="#666" stroke="#666" strokeWidth="0.5" /></svg>
      </div>
      <span className="whitespace-nowrap tracking-[0.25px] text-[#333]">广联达BIM土建计量平台 GTJ2018 - [F:\\水岸明珠.GTJ]</span>
    </div>

    <div className="flex h-[16px] items-end border-b border-[#d0d0d0] bg-white text-[#444]">
      <div className="flex h-[15px] w-[32px] items-center rounded-tr-[2px] bg-[#4a9bef] pl-[1px] text-white">建模</div>
      <span className="ml-[11px] flex h-[15px] w-[43px] items-center">视图</span>
      <span className="flex h-[15px] w-[42px] items-center">工具</span>
      <span className="flex h-[15px] w-[53px] items-center">工程量</span>
      <span className="flex h-[15px] items-center">云应用</span>
      <div className="ml-auto flex h-[15px] items-center pb-[1px] text-[#333]">
        <svg width="14" height="14" viewBox="0 0 14 14" className="mr-[2px]">
          <rect width="14" height="14" fill="#a9cdf0" />
          <circle cx="7" cy="5" r="3" fill="#fff" />
          <path d="M2 14c0-4 10-4 10 0Z" fill="#fff" />
        </svg>
        <span className="w-[34px]">小林</span>
        <Bell size={11} fill="#888" className="mr-[4px] text-[#888]" />
        <MessageCircle size={11} fill="#888" className="mr-[7px] text-[#888]" />
        <span className="mr-[1px] text-[#888]">?</span>
        <span className="mr-[15px] text-[#888]">-</span>
        <Shirt size={11} fill="#888" className="-mr-[6px] text-[#888]" />
      </div>
    </div>

    <Ribbon />

    <div className="flex h-[25px] items-end gap-[5px] border-b border-[#bbbdbf] bg-[#d6d8da] pb-[1px]">
      <Selector text="" className="w-[18px]" />
      <Selector text="筏板基础" className="w-[84px]" />
      <Selector text="FB-1" className="w-[85px]" />
      <Selector text="分层1" className="w-[84px]" />
    </div>

    <div className="flex h-[570px]">
      <div className="flex w-[342px] shrink-0 flex-col overflow-hidden bg-[#dfe1e3] pt-[1px]">
        <ComponentPanel />
        <div className="h-[4px] shrink-0" />
        <AttrPanel />
      </div>
      <Canvas />
    </div>

    <div className="h-[19px] bg-[#7b7b7b]">
      <div className="ml-[111px] h-[9px] w-[90px] rounded-b-[2px] bg-[#0b3e8c]" />
    </div>

    <ClipBar />
    <RuleDialog />
    <ResultPanel />
    <Annotations />
  </div>
);

export default App;
